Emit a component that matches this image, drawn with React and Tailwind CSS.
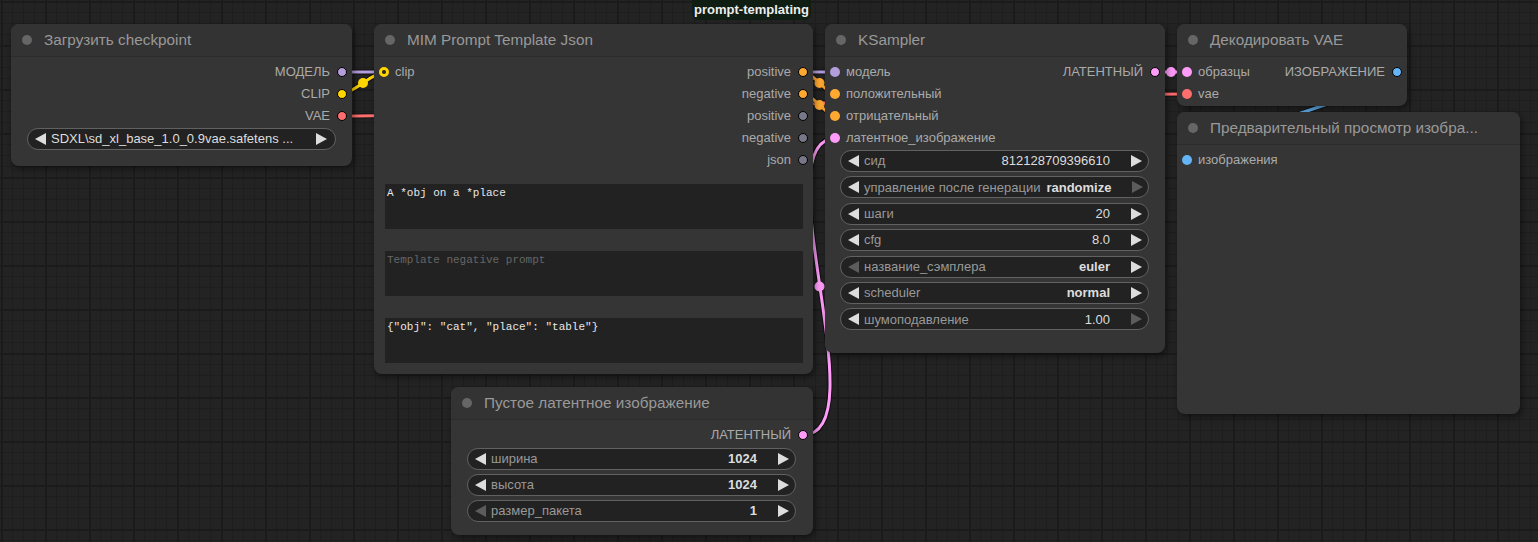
import React from 'react'

// slot colours by type
const C = {
    model: 'bg-[#b39ddb]',
    clip: 'bg-[#ffd500]',
    vae: 'bg-[#ff6e6e]',
    cond: 'bg-[#ffa931]',
    latent: 'bg-[#ff9cf9]',
    image: 'bg-[#64b5f6]',
    none: 'bg-[#778]'
}

const Arrow = ({ dir, dim }) => (
    <svg width="11" height="12" viewBox="0 0 11 12" className="shrink-0">
        {dir === 'left'
            ? <polygon points="11,0 11,12 0,6" fill={dim ? '#5c5c5c' : '#dddddd'} />
            : <polygon points="0,0 0,12 11,6" fill={dim ? '#5c5c5c' : '#dddddd'} />}
    </svg>
)

const Dot = ({ color, out }) => (
    <span className={`block w-[10px] h-[10px] rounded-full shrink-0 ${color} ${out ? 'border border-black' : ''}`} />
)

const NodeTitle = ({ children }) => (
    <div className="h-[33px] flex items-center gap-[12px] pl-[11px] bg-[#333] rounded-t-[8px] border-b border-[#2c2c2c]">
        <span className="w-[10px] h-[10px] rounded-full bg-[#666]" />
        <span className="text-[15.3px] text-[#999] whitespace-nowrap">{children}</span>
    </div>
)

const Row = ({ input, output }) => (
    <div className="h-[22px] flex items-center justify-between text-[13px] text-[#aaa]">
        <div className="flex items-center gap-[6px] pl-[5px]">
            {input && (input.ring
                ? <span className="block w-[10px] h-[10px] rounded-full border-[3px] border-[#ffd500] bg-[#222]" />
                : <Dot color={input.color} />)}
            {input && <span>{input.label}</span>}
        </div>
        <div className="flex items-center gap-[7px] pr-[5px]">
            {output && <span>{output.label}</span>}
            {output && <Dot color={output.color} out />}
        </div>
    </div>
)

const Widget = ({ label, value, bold, dimL, dimR }) => (
    <div className="h-[22px] flex items-center rounded-full border border-[#616161] bg-[#222] pl-[7px] pr-[6px] text-[13px]">
        <Arrow dir="left" dim={dimL} />
        <span className="ml-[5px] text-[#999] whitespace-nowrap">{label}</span>
        <span className="flex-1 min-w-[6px]" />
        <span className={`text-[#ddd] whitespace-nowrap ${bold ? 'font-bold' : ''}`}>{value}</span>
        <span className="w-[21px] shrink-0" />
        <Arrow dir="right" dim={dimR} />
    </div>
)

const Node = ({ className, children }) => (
    <div className={`absolute bg-[#353535] rounded-[8px] shadow-[2px_3px_6px_rgba(0,0,0,0.45)] ${className}`}>
        {children}
    </div>
)

const links = [
    { d: 'M342,72 L836,72', c: '#b39ddb' },
    { d: 'M342,94 C352,94 374,72 384,72', c: '#ffd500', mid: [363, 83] },
    { d: 'M342,116 C553,116 976,94 1187,94', c: '#ff6e6e' },
    { d: 'M803,72 C813,72 826,94 836,94', c: '#ffa931', mid: [819.5, 83] },
    { d: 'M803,94 C813,94 826,116 836,116', c: '#ffa931', mid: [819.5, 105] },
    { d: 'M803,435 C880,435 760,138 836,138', c: '#ff9cf9', mid: [819.5, 286.5] },
    { d: 'M1155,72 L1187,72', c: '#ff9cf9', mid: [1171, 72] },
    { d: 'M1397,72 C1450,72 1134,160 1187,160', c: '#64b5f6' }
]

export default function App() {
    return (
        <div
            className="relative w-[1538px] h-[542px] overflow-hidden bg-[#232323] bg-[linear-gradient(to_right,#1b1b1b_2px,transparent_2px),linear-gradient(to_bottom,#1b1b1b_2px,transparent_2px),linear-gradient(to_right,#1e1e1e_1px,transparent_1px),linear-gradient(to_bottom,#1e1e1e_1px,transparent_1px)] bg-[size:44px_44px,44px_44px,11px_11px,11px_11px] bg-[position:1px_1px]"
            style={{ fontFamily: '"Liberation Sans", Arial, sans-serif' }}
        >
            {/* links under the nodes */}
            <svg className="absolute inset-0" width="1538" height="542">
                {links.map((l, i) => (
                    <g key={i}>
                        <path d={l.d} stroke="rgba(0,0,0,0.55)" strokeWidth="5" fill="none" />
                        <path d={l.d} stroke={l.c} strokeWidth="3" fill="none" />
                        {l.mid && <circle cx={l.mid[0]} cy={l.mid[1]} r="5" fill={l.c} />}
                    </g>
                ))}
            </svg>

            {/* group label */}
            <div className="absolute left-[692px] top-[-6px] w-[119px] h-[26px] pt-[6px] rounded-[6px] bg-[#0f1d12] text-center text-[13px] font-bold text-[#eee]">
                prompt-templating
            </div>

            {/* Загрузить checkpoint */}
            <Node className="left-[11px] top-[24px] w-[341px] h-[142px]">
                <NodeTitle>Загрузить checkpoint</NodeTitle>
                <div className="pt-[4px]">
                    <Row output={{ label: 'МОДЕЛЬ', color: C.model }} />
                    <Row output={{ label: 'CLIP', color: C.clip }} />
                    <Row output={{ label: 'VAE', color: C.vae }} />
                    <div className="mx-[16px] mt-[1px] h-[22px] flex items-center rounded-full border border-[#616161] bg-[#222] pl-[7px] pr-[8px] text-[13px]">
                        <Arrow dir="left" />
                        <span className="ml-[5px] text-[#ddd] whitespace-nowrap">SDXL\sd_xl_base_1.0_0.9vae.safetens ...</span>
                        <span className="flex-1" />
                        <Arrow dir="right" />
                    </div>
                </div>
            </Node>

            {/* MIM Prompt Template Json */}
            <Node className="left-[374px] top-[24px] w-[439px] h-[350px]">
                <NodeTitle>MIM Prompt Template Json</NodeTitle>
                <div className="pt-[4px]">
                    <Row input={{ label: 'clip', ring: true }} output={{ label: 'positive', color: C.cond }} />
                    <Row output={{ label: 'negative', color: C.cond }} />
                    <Row output={{ label: 'positive', color: C.none }} />
                    <Row output={{ label: 'negative', color: C.none }} />
                    <Row output={{ label: 'json', color: C.none }} />
                </div>
                <div className="flex flex-col pl-[11px] pr-[10px] pt-[13px] gap-[22px] text-[11px]" style={{ fontFamily: '"Liberation Mono", monospace' }}>
                    <div className="h-[45px] bg-[#222] px-[2px] py-[1px] text-[#e8e8e8]">A *obj on a *place</div>
                    <div className="h-[45px] bg-[#222] px-[2px] py-[1px] text-[#666]">Template negative prompt</div>
                    <div className="h-[45px] bg-[#222] px-[2px] py-[1px] text-[#e8e8e8]">{'{"obj": "cat", "place": "table"}'}</div>
                </div>
            </Node>

            {/* KSampler */}
            <Node className="left-[825px] top-[24px] w-[340px] h-[329px]">
                <NodeTitle>KSampler</NodeTitle>
                <div className="pt-[4px]">
                    <Row input={{ label: 'модель', color: C.model }} output={{ label: 'ЛАТЕНТНЫЙ', color: C.latent }} />
                    <Row input={{ label: 'положительный', color: C.cond }} />
                    <Row input={{ label: 'отрицательный', color: C.cond }} />
                    <Row input={{ label: 'латентное_изображение', color: C.latent }} />
                </div>
                <div className="flex flex-col gap-[4.4px] pl-[15px] pr-[16px] pt-[1px]">
                    <Widget label="сид" value="812128709396610" />
                    <Widget label="управление после генерации" value="randomize" bold dimR />
                    <Widget label="шаги" value="20" />
                    <Widget label="cfg" value="8.0" />
                    <Widget label="название_сэмплера" value="euler" bold dimL />
                    <Widget label="scheduler" value="normal" bold />
                    <Widget label="шумоподавление" value="1.00" dimR />
                </div>
            </Node>

            {/* Декодировать VAE */}
            <Node className="left-[1177px] top-[24px] w-[230px] h-[82px]">
                <NodeTitle>Декодировать VAE</NodeTitle>
                <div className="pt-[4px]">
                    <Row input={{ label: 'образцы', color: C.latent }} output={{ label: 'ИЗОБРАЖЕНИЕ', color: C.image }} />
                    <Row input={{ label: 'vae', color: C.vae }} />
                </div>
            </Node>

            {/* Предварительный просмотр */}
            <Node className="left-[1177px] top-[112px] w-[343px] h-[302px]">
                <NodeTitle>Предварительный просмотр изобра...</NodeTitle>
                <div className="pt-[4px]">
                    <Row input={{ label: 'изображения', color: C.image }} />
                </div>
            </Node>

            {/* Пустое латентное изображение */}
            <Node className="left-[451px] top-[387px] w-[362px] h-[148px]">
                <NodeTitle>Пустое латентное изображение</NodeTitle>
                <div className="pt-[4px]">
                    <Row output={{ label: 'ЛАТЕНТНЫЙ', color: C.latent }} />
                </div>
                <div className="flex flex-col gap-[4px] pl-[16px] pr-[17px] pt-[2px]">
                    <Widget label="ширина" value="1024" bold />
                    <Widget label="высота" value="1024" bold />
                    <Widget label="размер_пакета" value="1" bold dimL />
                </div>
            </Node>
        </div>
    )
}
